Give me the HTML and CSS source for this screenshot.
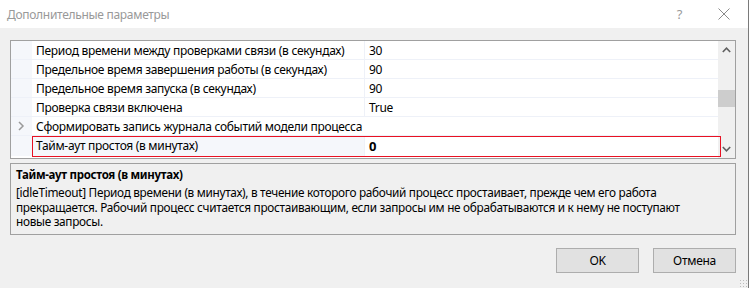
FILE: index.html
```html
<!DOCTYPE html>
<html lang="ru">
<head>
    <meta charset="UTF-8">
    <title>Дополнительные параметры</title>
    <link rel="stylesheet" href="styles.css">
</head>
<body>

    <div class="window">
        <div class="titlebar">
            <span class="title">Дополнительные параметры</span>
            <span class="help">?</span>
            <svg class="close" width="12" height="12" viewBox="0 0 12 12">
                <path d="M0.5 0.5 L11.5 11.5 M11.5 0.5 L0.5 11.5" stroke="#8a8a8a" stroke-width="1" fill="none"/>
            </svg>
        </div>

        <div class="content">
            <div class="grid">
                <div class="rows">
                    <div class="row">
                        <div class="gutter"></div>
                        <div class="name">Период времени между проверками связи (в секундах)</div>
                        <div class="value">30</div>
                    </div>
                    <div class="row">
                        <div class="gutter"></div>
                        <div class="name">Предельное время завершения работы (в секундах)</div>
                        <div class="value">90</div>
                    </div>
                    <div class="row">
                        <div class="gutter"></div>
                        <div class="name">Предельное время запуска (в секундах)</div>
                        <div class="value">90</div>
                    </div>
                    <div class="row">
                        <div class="gutter"></div>
                        <div class="name">Проверка связи включена</div>
                        <div class="value">True</div>
                    </div>
                    <div class="row category">
                        <div class="gutter">
                            <svg width="7" height="10" viewBox="0 0 7 10">
                                <path d="M1 1 L5 5 L1 9" stroke="#9a9a9a" stroke-width="1.5" fill="none"/>
                            </svg>
                        </div>
                        <div class="name">Сформировать запись журнала событий модели процесса</div>
                    </div>
                    <div class="row selected">
                        <div class="gutter"></div>
                        <div class="name">Тайм-аут простоя (в минутах)</div>
                        <div class="value">0</div>
                    </div>
                </div>
                <div class="scrollbar">
                    <svg class="arrow" width="9" height="6" viewBox="0 0 9 6">
                        <path d="M0.8 5 L4.5 1.2 L8.2 5" stroke="#606060" stroke-width="1.6" fill="none"/>
                    </svg>
                    <div class="track">
                        <div class="thumb"></div>
                    </div>
                    <svg class="arrow" width="9" height="6" viewBox="0 0 9 6">
                        <path d="M0.8 1 L4.5 4.8 L8.2 1" stroke="#606060" stroke-width="1.6" fill="none"/>
                    </svg>
                </div>
                <div class="highlight"></div>
            </div>

            <div class="desc">
                <div class="desc-title">Тайм-аут простоя (в минутах)</div>
                <p>[idleTimeout] Период времени (в минутах), в течение которого рабочий процесс простаивает, прежде чем его работа<br>
                прекращается. Рабочий процесс считается простаивающим, если запросы им не обрабатываются и к нему не поступают<br>
                новые запросы.</p>
            </div>

            <div class="buttons">
                <button class="btn">OK</button>
                <button class="btn">Отмена</button>
            </div>
        </div>
        <div class="grip"></div>
    </div>

</body>
</html>
```

FILE: styles.css
```css
/* Base styling */
body {
    font-family: 'Noto Sans', 'Liberation Sans', sans-serif;
    font-size: 12px;
    letter-spacing: -0.3px;
    color: #000;
    background-color: #f0f0f0;
    margin: 0;
    padding: 0;
}

.window {
    position: relative;
    width: 748px;
    height: 288px;
    border-right: 1px solid #7a7a7a;
    background-color: #f0f0f0;
}

.titlebar {
    height: 28px;
    background-color: #fff;
    display: flex;
    align-items: center;
    padding-left: 7px;
}

.title {
    flex: 1;
    color: #999;
    font-size: 12px;
}

.help {
    color: #9a9a9a;
    font-size: 13px;
    margin-right: 36px;
}

.close {
    margin-right: 18px;
}

.content {
    padding: 12px 12px 0 10px;
}

/* Property grid */
.grid {
    position: relative;
    display: flex;
    width: 724px;
    height: 117px;
    border: 1px solid #a0a0a0;
    background-color: #fff;
}

.rows {
    width: 707px;
}

.row {
    display: flex;
    height: 18px;
    border-bottom: 1px solid #eef1f8;
    line-height: 19px;
    white-space: nowrap;
}

.row.selected {
    height: 20px;
    line-height: 20px;
    border-bottom: none;
}

.gutter {
    width: 21px;
    flex-shrink: 0;
    background-color: #f5f7fb;
    display: flex;
    align-items: center;
    justify-content: center;
}

.name {
    width: 328px;
    padding-left: 4px;
    border-right: 1px solid #eef1f8;
    overflow: visible;
}

.value {
    padding-left: 4px;
}

.category .name {
    border-right: none;
}

.selected .name {
    background-color: #f5f7fb;
}

.selected .value {
    font-weight: bold;
    font-size: 13px;
}

.highlight {
    position: absolute;
    left: 21px;
    top: 95px;
    width: 687px;
    height: 19px;
    border: 1px solid #e81123;
}

.scrollbar {
    width: 17px;
    background-color: #f0f0f0;
    display: flex;
    flex-direction: column;
    align-items: center;
}

.arrow {
    margin: 6px 0;
}

.track {
    flex: 1;
    width: 100%;
}

.thumb {
    margin-top: 31px;
    height: 17px;
    background-color: #cdcdcd;
}

/* Description panel */
.desc {
    width: 714px;
    height: 67px;
    margin-top: 4px;
    padding: 3px 5px 0 5px;
    border: 1px solid #a0a0a0;
}

.desc-title {
    font-weight: bold;
    font-size: 11.5px;
    line-height: 16px;
}

.desc p {
    margin: 2px 0 0 0;
    font-size: 11.8px;
    line-height: 14.5px;
    white-space: nowrap;
}

/* Buttons */
.buttons {
    display: flex;
    justify-content: flex-end;
    gap: 14px;
    width: 726px;
    margin-top: 13px;
}

.btn {
    width: 83px;
    height: 25px;
    background-color: #e1e1e1;
    border: 1px solid #adadad;
    font-family: 'Noto Sans', 'Liberation Sans', sans-serif;
    font-size: 12px;
    letter-spacing: -0.3px;
    color: #000;
    padding: 0;
}

.grip {
    position: absolute;
    right: 1px;
    bottom: 1px;
    width: 8px;
    height: 8px;
    background-image: radial-gradient(#bcbcbc 0.8px, transparent 1px);
    background-size: 3px 3px;
}
```
